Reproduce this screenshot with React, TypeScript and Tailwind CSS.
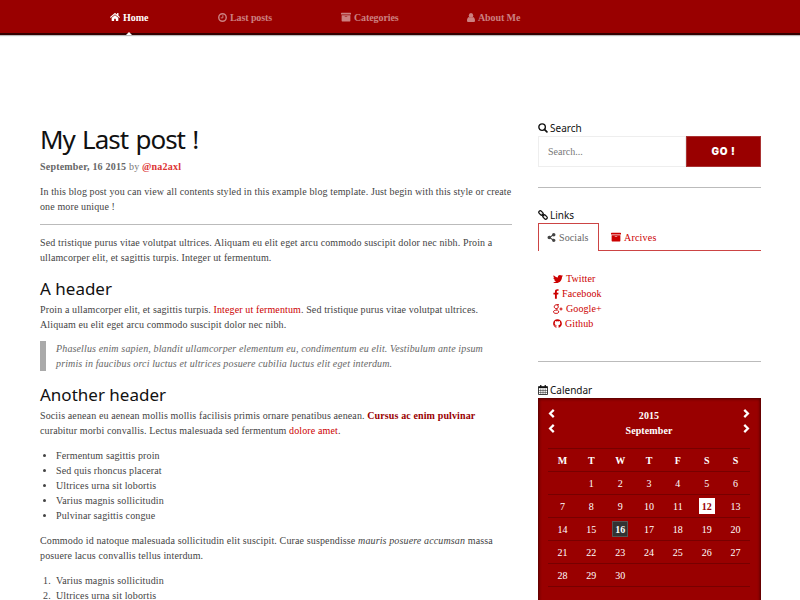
import type { ReactNode } from "react";
import { FaArchive, FaFacebookF, FaGithub, FaHome, FaShareAlt, FaTwitter } from "react-icons/fa";

const heading = "font-['Trebuchet_MS','Noto_Sans',sans-serif] text-[#111]";

function ClockIcon() {
  return (
    <svg viewBox="0 0 18 18" className="size-[9px]" fill="none" stroke="currentColor" strokeWidth="2.8">
      <circle cx="9" cy="9" r="7.5" />
      <path d="M9.7 4.5v5.2H5.5" strokeWidth="2" />
    </svg>
  );
}

function UserIcon() {
  return (
    <svg viewBox="0 0 16 18" className="h-[9px] w-2" fill="currentColor">
      <ellipse cx="8" cy="5" rx="4.5" ry="5" />
      <path d="M4 8C1 9 0 12 0 15c0 2 1 3 3 3h10c2 0 3-1 3-3 0-3-1-6-4-7-2.400 2.400-5.600 2.400-8 0z" />
    </svg>
  );
}

function SearchIcon() {
  return (
    <svg viewBox="0 0 20 20" className="size-[10px]" fill="none" stroke="currentColor" strokeWidth="2.800">
      <circle cx="8.200" cy="8.200" r="6.500" />
      <path d="M12.800 12.800l5 5" strokeWidth="3.400" strokeLinecap="round" />
    </svg>
  );
}

function LinkIcon() {
  return (
    <svg viewBox="0 0 20 20" className="size-[10px]" fill="none" stroke="currentColor" strokeWidth="2.400">
      <rect x="1" y="3" width="10" height="6" rx="3" transform="rotate(45 6 6)" />
      <rect x="9" y="11" width="10" height="6" rx="3" transform="rotate(45 14 14)" />
      <path d="M7.500 7.500l5 5" />
    </svg>
  );
}

function Chevron({ flip = false }: { flip?: boolean }) {
  return (
    <svg
      viewBox="0 0 12 16"
      className={flip ? "mb-1 h-[9px] w-[7px] -scale-x-100" : "mb-1 h-[9px] w-[7px]"}
      fill="none"
      stroke="currentColor"
      strokeWidth="4"
    >
      <path d="M10 1.500L3.500 8l6.500 6.500" />
    </svg>
  );
}

function GooglePlusIcon() {
  return (
    <svg viewBox="0 0 20 20" className="h-[10px] w-[10px]" fill="none" stroke="currentColor" strokeWidth="2">
      <path d="M12 1.500H7.500C4 1.500 2.500 3.500 2.500 5.500s1.500 3.700 4 3.700 4-1.500 4-3.700-1-3.600-3-4M8 9.200c-1.200 1.300-.4 2 1 3 1.600 1.200 2.400 2 2.400 3.400 0 2-2 3.200-5 3.200S1 17.600 1 15.600s2.500-3.500 7-3.500M16 7v6M13 10h6" />
    </svg>
  );
}

function CalendarIcon() {
  return (
    <svg viewBox="0 0 20 20" className="size-[10px]" fill="none" stroke="currentColor">
      <path d="M1 3h18v16H1z" strokeWidth="1.600" />
      <path d="M1 11h18M1 15h18M5.500 7v12M10 7v12M14.500 7v12" strokeWidth="0.900" />
      <path d="M1 5h18" strokeWidth="2.400" />
      <path d="M5.500 0v5M14.500 0v5" strokeWidth="2.500" />
    </svg>
  );
}

function NavItem({ icon, label, className }: { icon: ReactNode; label: string; className: string }) {
  return (
    <a className={`flex h-[34px] items-center gap-[3px] ${className}`}>
      {icon}
      <span>{label}</span>
    </a>
  );
}

function WidgetTitle({ icon, label }: { icon: ReactNode; label: string }) {
  return (
    <h4 className={`flex h-4 items-center gap-[2px] text-[10px] ${heading}`}>
      {icon}
      <span>{label}</span>
    </h4>
  );
}

const weeks = [
  ["", "1", "2", "3", "4", "5", "6"],
  ["7", "8", "9", "10", "11", "12", "13"],
  ["14", "15", "16", "17", "18", "19", "20"],
  ["21", "22", "23", "24", "25", "26", "27"],
  ["28", "29", "30", "", "", "", ""],
];

function Day({ value }: { value: string }) {
  if (value === "12")
    return <span className="flex size-4 items-center justify-center bg-white font-bold text-[#900]">12</span>;
  if (value === "16")
    return (
      <span className="flex size-4 items-center justify-center border border-[#555] bg-[#333] font-bold">16</span>
    );
  return <span>{value}</span>;
}

function Calendar() {
  return (
    <div className="h-[230px] border border-[#600] bg-[#900] pt-[9px] pr-[10px] pl-[9px] text-[10px] text-white shadow-[inset_0_0_3px_#400]">
      {["2015", "September"].map((t) => (
        <div key={t} className="flex h-[15px] items-center justify-between font-bold">
          <Chevron />
          <span className="tracking-[0.1px]">{t}</span>
          <Chevron flip />
        </div>
      ))}
      <div className="mt-[10px] grid h-6 grid-cols-7 place-items-center border-y border-[#700] font-bold">
        {["M", "T", "W", "T", "F", "S", "S"].map((d, i) => (
          <span key={i}>{d}</span>
        ))}
      </div>
      {weeks.map((w, i) => (
        <div key={i} className="grid h-[23px] grid-cols-7 place-items-center border-b border-[#700]">
          {w.map((d, j) => (
            <Day key={j} value={d} />
          ))}
        </div>
      ))}
    </div>
  );
}

export default function App() {
  return (
    <div className="h-[600px] w-[800px] overflow-hidden bg-white font-['Liberation_Serif',serif] text-[10px] leading-[15px] text-[#444]">
      <nav className="relative flex h-[35px] border-b-2 border-[#300] bg-[#900] pl-[110px] font-bold tracking-[-0.1px] text-[#cc8080] shadow-[0_1px_1px_#bbb]">
        <NavItem icon={<FaHome className="size-[10px]" />} label="Home" className="w-[108px] tracking-normal text-white" />
        <NavItem icon={<ClockIcon />} label="Last posts" className="w-[123px]" />
        <NavItem icon={<FaArchive className="size-[10px]" />} label="Categories" className="w-[126px]" />
        <NavItem icon={<UserIcon />} label="About Me" className="" />
        <span className="absolute top-[32px] left-[126px] h-0 w-0 border-x-3 border-b-3 border-x-transparent border-b-white" />
      </nav>

      <div className="flex pt-[85px] pl-10">
        <main className="w-[472px] tracking-[0.12px] whitespace-nowrap">
          <h1 className={`h-[39px] text-[26px] leading-[39px] tracking-[-1px] [word-spacing:1.5px] ${heading}`}>
            My Last post !
          </h1>
          <p className="tracking-[0.2px] text-[#777]">
            <b className="text-[#666]">September, 16 2015</b> by <b className="text-[#d33]">@na2axl</b>
          </p>
          <p className="mt-[10px]">
            In this blog post you can view all contents styled in this example blog template. Just begin with this style or create
            <br />
            one more unique !
          </p>
          <hr className="mt-[10px] border-[#bbb]" />
          <p className="mt-[10px]">
            Sed tristique purus vitae volutpat ultrices. Aliquam eu elit eget arcu commodo suscipit dolor nec nibh. Proin a
            <br />
            ullamcorper elit, et sagittis turpis. Integer ut fermentum.
          </p>
          <h2 className={`mt-[10px] h-[27px] text-[17px] leading-[27px] tracking-normal ${heading}`}>A header</h2>
          <p>
            Proin a ullamcorper elit, et sagittis turpis. <a className="text-[#c00]">Integer ut fermentum</a>. Sed tristique purus vitae volutpat ultrices.
            <br />
            Aliquam eu elit eget arcu commodo suscipit dolor nec nibh.
          </p>
          <blockquote className="mt-[9px] border-l-[6px] border-[#aaa] pl-[10px] tracking-[0.135px] text-[#666] italic">
            Phasellus enim sapien, blandit ullamcorper elementum eu, condimentum eu elit. Vestibulum ante ipsum
            <br />
            primis in faucibus orci luctus et ultrices posuere cubilia luctus elit eget interdum.
          </blockquote>
          <h2 className={`mt-[10px] h-[27px] text-[17px] leading-[27px] tracking-normal ${heading}`}>Another header</h2>
          <p>
            Sociis aenean eu aenean mollis mollis facilisis primis ornare penatibus aenean. <b className="text-[#900]">Cursus ac enim pulvinar</b>
            <br />
            curabitur morbi convallis. Lectus malesuada sed fermentum <a className="text-[#c00]">dolore amet</a>.
          </p>
          <ul className="mt-[10px] list-disc pl-4 tracking-[0.13px]">
            <li>Fermentum sagittis proin</li>
            <li>Sed quis rhoncus placerat</li>
            <li>Ultrices urna sit lobortis</li>
            <li>Varius magnis sollicitudin</li>
            <li>Pulvinar sagittis congue</li>
          </ul>
          <p className="mt-[10px] tracking-[0.13px]">
            Commodo id natoque malesuada sollicitudin elit suscipit. Curae suspendisse <i>mauris posuere accumsan</i> massa
            <br />
            posuere lacus convallis tellus interdum.
          </p>
          <ol className="mt-[10px] pl-[3px] tracking-[0.13px]">
            <li className="flex"><span className="w-[13px]">1.</span>Varius magnis sollicitudin</li>
            <li className="flex"><span className="w-[13px]">2.</span>Ultrices urna sit lobortis</li>
          </ol>
        </main>

        <aside className="ml-[26px] w-[223px]">
          <WidgetTitle icon={<SearchIcon />} label="Search" />
          <div className="flex h-[31px]">
            <div className="flex w-[148px] items-center border border-[#eee] pb-px pl-[9px] text-[#777]">Search...</div>
            <button className="flex-1 border border-[#a33] bg-[#900] font-['Inter',sans-serif] text-[10px] font-black tracking-[0.7px] text-white">
              GO !
            </button>
          </div>
          <hr className="mt-5 border-[#bbb]" />
          <div className="mt-[19px]">
            <WidgetTitle icon={<LinkIcon />} label="Links" />
          </div>
          <div className="flex h-7">
            <a className="flex w-[61px] items-center gap-[3px] border-x border-t border-x-[#cc4444] border-t-[#cc4444] pl-2 text-[#666]">
              <FaShareAlt className="size-[9px] text-[#444]" />
              <span className="tracking-[0.1px]">Socials</span>
            </a>
            <a className="flex flex-1 items-center gap-[3px] border-b border-b-[#cc4444] pt-px pl-3 text-[#c00]">
              <FaArchive className="size-[10px]" />
              <span className="tracking-[0.2px]">Arcives</span>
            </a>
          </div>
          <div className="mt-5 flex flex-col pl-[15px] tracking-[0.1px] text-[#c00]">
            <a className="flex items-center gap-[3px]"><FaTwitter className="size-[10px]" />Twitter</a>
            <a className="flex items-center gap-[3px]"><FaFacebookF className="h-[10px] w-[6px]" />Facebook</a>
            <a className="flex items-center gap-[3px]"><GooglePlusIcon />Google+</a>
            <a className="flex items-center gap-[3px]"><FaGithub className="size-[9px]" />Github</a>
          </div>
          <hr className="mt-[30px] border-[#bbb]" />
          <div className="mt-5">
            <WidgetTitle icon={<CalendarIcon />} label="Calendar" />
          </div>
          <Calendar />
        </aside>
      </div>
    </div>
  );
}
